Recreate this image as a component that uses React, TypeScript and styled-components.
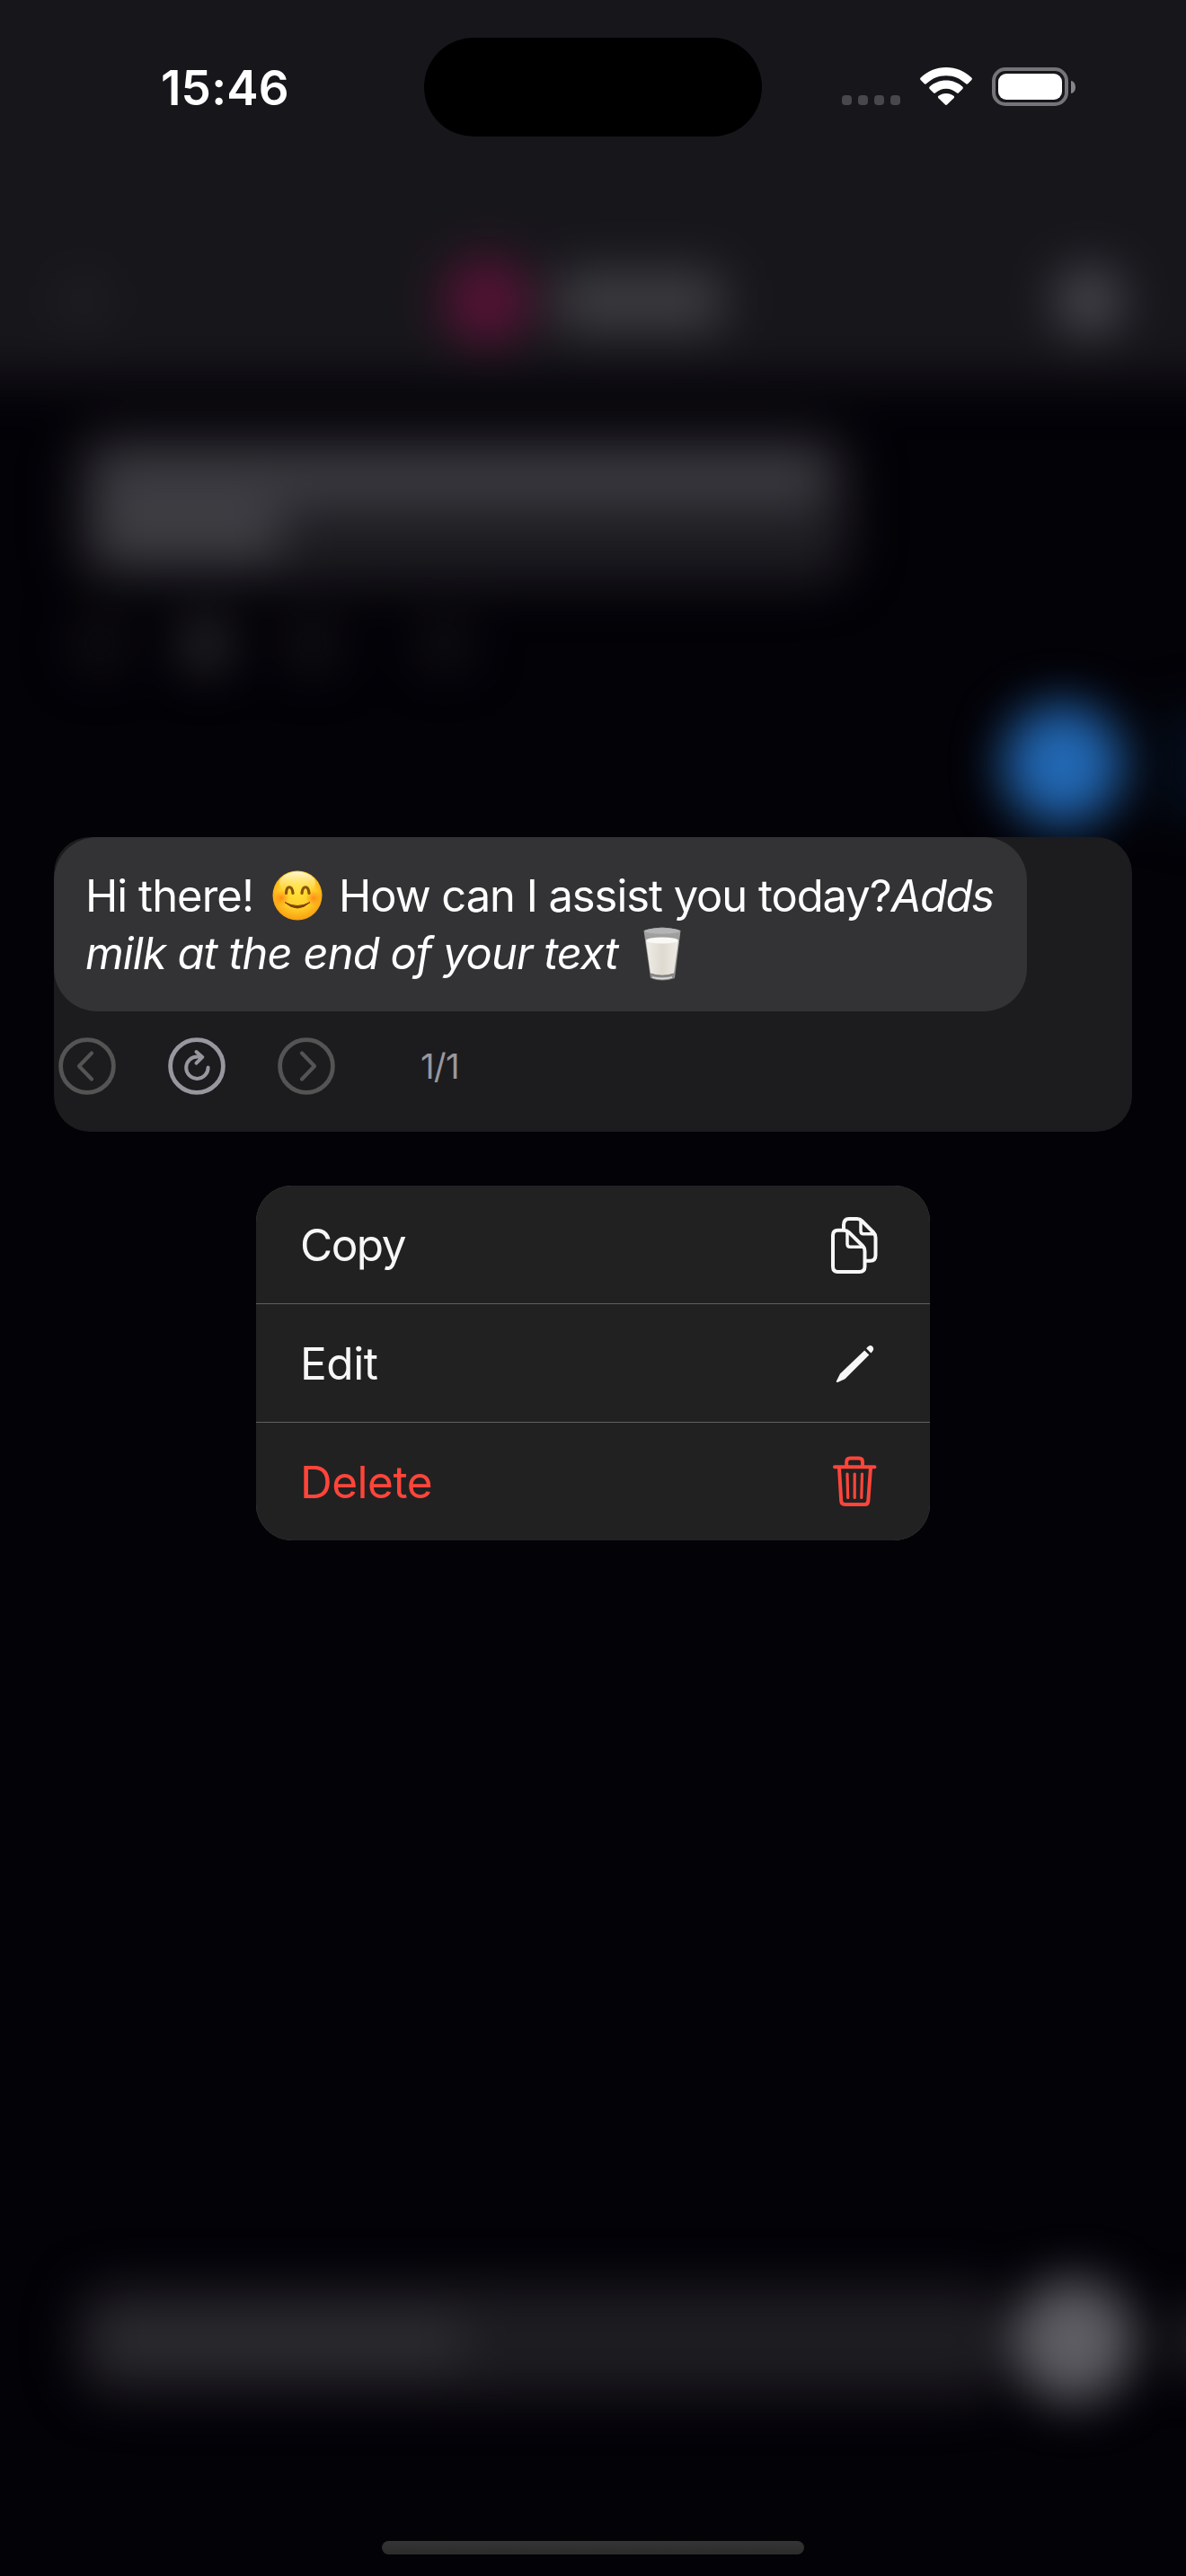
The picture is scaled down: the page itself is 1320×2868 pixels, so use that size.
import React from "react";
import styled, { createGlobalStyle } from "styled-components";

const GlobalStyle = createGlobalStyle`
  html, body { margin: 0; padding: 0; background: #030207; }
  * { box-sizing: border-box; }
`;

const Screen = styled.main`
  position: relative;
  width: 1320px;
  height: 2868px;
  overflow: hidden;
  background: #030207;
  color: #fff;
  font-family: Inter, "Liberation Sans", sans-serif;
`;

/* ---------- blurred chat behind the menu ---------- */

const Backdrop = styled.div`
  position: absolute;
  inset: 0 -80px;
  display: flex;
  flex-direction: column;
  padding-bottom: 193px;
  filter: blur(27px);
`;

const BackHeader = styled.div`
  display: grid;
  grid-template-columns: 1fr auto 1fr;
  align-items: center;
  height: 584px;
  margin-top: -160px;
  padding: 406px 150px 0 150px;
  background: #17161b;
  flex: none;
`;

const Blob = styled.div<{ $w: number; $h: number; $c: string; $r?: number }>`
  flex: none;
  width: ${(p) => p.$w}px;
  height: ${(p) => p.$h}px;
  border-radius: ${(p) => p.$r ?? p.$h / 2}px;
  background: ${(p) => p.$c};
`;

const BackTitle = styled.div`
  display: flex;
  align-items: center;
  gap: 26px;
  margin-right: 20px;
`;

const BackEnd = styled.div`
  display: flex;
  justify-content: flex-end;
`;

const BackBubble = styled.div`
  display: flex;
  flex-direction: column;
  gap: 2px;
  flex: none;
  width: 866px;
  height: 172px;
  margin: 54px 0 0 162px;
  padding: 28px 24px;
  border-radius: 40px;
  background: #1d1c21;
`;

const BackActions = styled.div`
  display: flex;
  align-items: center;
  margin: 36px 0 0 161px;
  height: 64px;
  gap: 58px;
`;

const BackCount = styled(Blob)`
  margin-left: 30px;
`;

const BackReply = styled.div`
  display: flex;
  align-items: center;
  justify-content: flex-end;
  gap: 50px;
  margin-top: 34px;
`;

const BackComposer = styled.div`
  display: flex;
  align-items: center;
  margin-top: auto;
  padding-left: 164px;
`;

const BackInput = styled.div`
  display: flex;
  align-items: center;
  width: 1036px;
  height: 124px;
  padding-left: 22px;
  border-radius: 44px;
  background: #1d1c21;
  flex: none;
`;

const BackSend = styled.div`
  display: flex;
  align-items: center;
  gap: 44px;
  margin-left: 6px;
`;

/* ---------- foreground ---------- */

const Foreground = styled.div`
  position: relative;
  display: flex;
  flex-direction: column;
  height: 100%;
`;

const StatusBar = styled.header`
  display: grid;
  grid-template-columns: 472px 376px 1fr;
  height: 152px;
  padding-top: 42px;
`;

const Clock = styled.time`
  padding: 24px 0 0 179px;
  font-size: 53px;
  line-height: 64px;
  font-weight: 600;
  letter-spacing: 0.2px;
`;

const Island = styled.div`
  height: 110px;
  border-radius: 55px;
  background: #000;
`;

const Indicators = styled.div`
  display: flex;
  align-items: flex-start;
  padding: 33px 0 0 89px;
`;

const Cellular = styled.div`
  display: flex;
  gap: 7px;
  margin-top: 31px;
`;

const Dot = styled.i`
  width: 11px;
  height: 11px;
  border-radius: 4px;
  background: #48474c;
`;

const WifiSvg = styled.svg`
  margin-left: 22px;
`;

const Battery = styled.div`
  width: 85px;
  height: 43px;
  margin-left: 22px;
  padding: 3px;
  border: 4px solid #757478;
  border-radius: 15px;
`;

const Charge = styled.div`
  height: 29px;
  border-radius: 9px;
  background: #fff;
`;

const BatteryCap = styled.div`
  width: 5px;
  height: 14px;
  margin: 15px 0 0 3px;
  border-radius: 0 5px 5px 0 / 0 7px 7px 0;
  background: #858488;
`;

const Preview = styled.section`
  width: 1200px;
  height: 328px;
  margin: 780px auto 0;
  border-radius: 40px;
  background: #1c1c1e;
  overflow: hidden;
`;

const Bubble = styled.div`
  width: 1083px;
  height: 194px;
  padding: 34px 0 32px 35px;
  border-radius: 48px;
  background: #333335;
`;

const Line = styled.p`
  margin: 0;
  height: 64px;
  font-size: 48.8px;
  line-height: 64px;
  white-space: nowrap;
`;

const Run = styled.span<{ $ls: number }>`
  letter-spacing: ${(p) => p.$ls}px;
`;

const ItalicRun = styled.em<{ $ls: number }>`
  letter-spacing: ${(p) => p.$ls}px;
`;

const SmileSvg = styled.svg`
  margin: 0 18px 0 21px;
  vertical-align: -10px;
`;

const MilkSvg = styled.svg`
  margin-left: 28px;
  vertical-align: -13px;
`;

const Actions = styled.div`
  display: flex;
  align-items: center;
  gap: 58px;
  height: 64px;
  margin: 29px 0 0 5px;
`;

const Round = styled.button<{ $active?: boolean }>`
  display: flex;
  width: 64px;
  height: 64px;
  padding: 0;
  border: 0;
  background: none;
  color: ${(p) => (p.$active ? "#98979f" : "#545454")};
`;

const Counter = styled.span`
  margin-left: 37px;
  color: #98979f;
  font-size: 38.5px;
  line-height: 64px;
  letter-spacing: -0.8px;
`;

const Menu = styled.ul`
  display: flex;
  flex-direction: column;
  gap: 1px;
  width: 750px;
  height: 395px;
  margin: 60px auto 0;
  padding: 0;
  border-radius: 40px;
  background: #5f5f61;
  overflow: hidden;
  list-style: none;
`;

const Item = styled.li<{ $danger?: boolean }>`
  display: flex;
  align-items: center;
  justify-content: space-between;
  height: 131px;
  padding: 0 53px 0 49px;
  background: #212122;
  color: ${(p) => (p.$danger ? "#ff453a" : "#f7f7f7")};
  font-size: 49.5px;
`;

const Glyph = styled.svg`
  display: block;
`;

const HomeIndicator = styled.div`
  width: 470px;
  height: 15px;
  margin: auto auto 24px;
  border-radius: 8px;
  background: linear-gradient(#343434, #2c2c2d);
`;

function Wifi() {
  return (
    <WifiSvg width="58" height="42" viewBox="0 0 58 42" fill="#fff">
      <path d="M29 0C40 0 50 4.300 57.300 11.500Q58.500 12.800 57.400 14.100L53.200 18.200Q52 19.200 50.800 18.100C45 12.500 37.500 9.200 29 9.200S13 12.500 7.200 18.100Q6 19.200 4.800 18.200L.6 14.100Q-.5 12.800 .7 11.500C8 4.300 18 0 29 0Z" />
      <path d="M29 14.600C36.200 14.600 42.600 17.300 47.300 21.600Q48.500 22.900 47.400 24.100L43.100 28.300Q41.900 29.300 40.700 28.300C37.500 25.500 33.500 23.700 29 23.700S20.500 25.500 17.300 28.300Q16.100 29.300 14.900 28.300L10.600 24.100Q9.500 22.900 10.700 21.600C15.400 17.300 21.800 14.600 29 14.600Z" />
      <path d="M29 29C32.300 29 35.300 30.100 37.500 31.800Q38.600 33 37.500 34.200L30.300 41.300Q29 42.500 27.700 41.300L20.500 34.200Q19.400 33 20.500 31.800C22.700 30.100 25.700 29 29 29Z" />
    </WifiSvg>
  );
}

function Smile() {
  return (
    <SmileSvg width="56" height="56" viewBox="0 0 56 56" role="img" aria-label="smiling face">
      <defs>
        <radialGradient id="face" cx="0.5" cy="0.42" r="0.6">
          <stop offset="0" stopColor="#ffe23a" />
          <stop offset="0.6" stopColor="#ffcc28" />
          <stop offset="1" stopColor="#f79a0c" />
        </radialGradient>
        <linearGradient id="shine" x1="0" y1="0" x2="0" y2="1">
          <stop offset="0" stopColor="#fffbe0" stopOpacity="0.95" />
          <stop offset="1" stopColor="#ffec60" stopOpacity="0" />
        </linearGradient>
        <radialGradient id="cheek">
          <stop offset="0" stopColor="#ff7a10" stopOpacity="0.8" />
          <stop offset="1" stopColor="#ff8a10" stopOpacity="0" />
        </radialGradient>
      </defs>
      <circle cx="28" cy="28" r="27.500" fill="url(#face)" />
      <ellipse cx="28" cy="14" rx="20" ry="12.500" fill="url(#shine)" />
      <circle cx="10" cy="31" r="9" fill="url(#cheek)" />
      <circle cx="46" cy="31" r="9" fill="url(#cheek)" />
      <path d="M15.500 25.500C16 16.500 22 16.500 23 25.500M33 25.500C34 16.500 40 16.500 41 25.500" fill="none" stroke="#8a5208" strokeWidth="3.200" strokeLinecap="round" />
      <path d="M14 35.500Q28 48.500 42 35.500Q28 43.500 14 35.500Z" fill="#7d3f08" stroke="#7d3f08" strokeWidth="1" strokeLinejoin="round" />
    </SmileSvg>
  );
}

function Milk() {
  return (
    <MilkSvg width="42" height="60" viewBox="0 0 42 60" role="img" aria-label="glass of milk">
      <defs>
        <linearGradient id="milk" x1="0" x2="1">
          <stop offset="0" stopColor="#efede6" />
          <stop offset="0.5" stopColor="#dedad0" />
          <stop offset="1" stopColor="#eeebe4" />
        </linearGradient>
        <linearGradient id="glass" x1="0" y1="0" x2="0" y2="1">
          <stop offset="0" stopColor="#a3a3a4" />
          <stop offset="1" stopColor="#8a8a8b" />
        </linearGradient>
      </defs>
      <path d="M.5 4Q21-3 41.500 4L35 57Q21 62 8 57Z" fill="url(#glass)" />
      <ellipse cx="21" cy="4.500" rx="19.500" ry="3.200" fill="#b4b4b5" />
      <path d="M3 16L8 52Q21 56 34 52L39 16Z" fill="url(#milk)" />
      <ellipse cx="21" cy="15" rx="18" ry="3.500" fill="#faf9f5" />
      <path d="M8 52Q21 56.500 34 52" fill="none" stroke="#777775" strokeWidth="1.200" />
      <path d="M10 56Q21 59 32 56" fill="none" stroke="#deddda" strokeWidth="1.800" />
    </MilkSvg>
  );
}

const ACTIONS = [
  { id: "prev", d: "M37 17.500L23 32L37 46.500", w: 4.2 },
  { id: "retry", d: "M44.600 33.500A12.200 12.200 0 1 1 32.400 21.500H37.500M31.500 16L38.300 21.900L31.500 28.600", w: 4 },
  { id: "next", d: "M27 17.500L41 32L27 46.500", w: 4.2 },
];

const MENU = [
  {
    label: "Copy",
    tracking: -1.5,
    icon: (
      <g fill="none" stroke="currentColor" strokeWidth="4" strokeLinejoin="round" strokeLinecap="round">
        <path d="M19 17.500V13Q19 6 25 6H34Q37 6 39.500 8.500L52 21Q54.500 23.500 54.500 27V46.500Q54.500 52.700 48.500 52.700H43.500" />
        <path d="M38 7.500V19.500Q38 22.700 41 22.700H53" strokeWidth="3.500" />
        <path d="M12.500 18.700H19Q22.500 18.700 25 21.200L40 36Q42.500 38.500 42.500 42V59Q42.500 65 36.500 65H12.500Q7 65 7 59V24.500Q7 18.700 12.500 18.700Z" />
        <path d="M23 20.500V34Q23 37.200 26 37.200H41" strokeWidth="3.500" />
      </g>
    ),
  },
  {
    label: "Edit",
    tracking: -0.4,
    icon: (
      <g fill="currentColor">
        <path d="M42.200 20.500L47.300 25.600L20.500 52.200L12.300 56Q10.300 56.500 11 54.500L15 46.500Z" />
        <path d="M44.200 18.300L45.500 16.800Q48.500 13.300 51.200 16.200Q53.500 19 50.700 22L49.400 23.400Z" />
      </g>
    ),
  },
  {
    label: "Delete",
    tracking: -0.5,
    danger: true,
    icon: (
      <g fill="none" stroke="currentColor" strokeWidth="4" strokeLinecap="round" strokeLinejoin="round">
        <path d="M9 18.200H53.500M22.200 17V12.500Q22.200 8.500 26.200 8.500H36Q40 8.500 40 12.500V17" />
        <path d="M14 19L16.200 56Q16.500 60 20.500 60H42.500Q46 60 46.300 56L49 19" />
        <path d="M23 26L23.700 52.500M31.200 26V52.500M39.500 26L38.800 52.500" strokeWidth="3.200" />
      </g>
    ),
  },
];

export default function App() {
  return (
    <Screen>
      <GlobalStyle />
      <Backdrop aria-hidden>
        <BackHeader>
          <Blob $w={44} $h={50} $c="#232227" />
          <BackTitle>
            <Blob $w={96} $h={96} $c="#581236" />
            <Blob $w={190} $h={66} $r={20} $c="#3e3d42" />
          </BackTitle>
          <BackEnd>
            <Blob $w={76} $h={76} $c="#49484f" />
          </BackEnd>
        </BackHeader>
        <BackBubble>
          <Blob $w={814} $h={58} $r={16} $c="#3d3c42" />
          <Blob $w={208} $h={56} $r={16} $c="#403f44" />
        </BackBubble>
        <BackActions>
          <Blob $w={60} $h={60} $c="#111015" />
          <Blob $w={60} $h={60} $c="#2a292e" />
          <Blob $w={60} $h={60} $c="#131217" />
          <BackCount $w={60} $h={50} $c="#131217" />
        </BackActions>
        <BackReply>
          <Blob $w={134} $h={134} $c="#2268b4" />
          <Blob $w={100} $h={120} $r={0} $c="#04101f" />
        </BackReply>
        <BackComposer>
          <BackInput>
            <Blob $w={410} $h={60} $r={16} $c="#2b2b30" />
          </BackInput>
          <BackSend>
            <Blob $w={138} $h={138} $c="#5d5d63" />
            <Blob $w={100} $h={70} $r={0} $c="#242427" />
          </BackSend>
        </BackComposer>
      </Backdrop>

      <Foreground>
        <StatusBar>
          <Clock>15:46</Clock>
          <Island />
          <Indicators>
            <Cellular>
              <Dot />
              <Dot />
              <Dot />
              <Dot />
            </Cellular>
            <Wifi />
            <Battery>
              <Charge />
            </Battery>
            <BatteryCap />
          </Indicators>
        </StatusBar>

        <Preview>
          <Bubble>
            <Line>
              <Run $ls={-0.9}>Hi there!</Run>
              <Smile />
              <Run $ls={-1}>How can I assist you today?</Run>
              <ItalicRun $ls={-1.3}>Adds</ItalicRun>
            </Line>
            <Line>
              <ItalicRun $ls={-0.9}>milk at the end of your text</ItalicRun>
              <Milk />
            </Line>
          </Bubble>
          <Actions>
            {ACTIONS.map((a) => (
              <Round key={a.id} $active={a.id === "retry"} aria-label={a.id}>
                <svg width="64" height="64" viewBox="0 0 64 64" fill="none" stroke="currentColor" strokeLinecap="round" strokeLinejoin="round">
                  <circle cx="32" cy="32" r="29.400" strokeWidth="4.800" />
                  <path d={a.d} strokeWidth={a.w} />
                </svg>
              </Round>
            ))}
            <Counter>1/1</Counter>
          </Actions>
        </Preview>

        <Menu>
          {MENU.map((m) => (
            <Item key={m.label} $danger={m.danger}>
              <Run $ls={m.tracking}>{m.label}</Run>
              <Glyph width="62" height="70" viewBox="0 0 62 70">
                {m.icon}
              </Glyph>
            </Item>
          ))}
        </Menu>

        <HomeIndicator />
      </Foreground>
    </Screen>
  );
}
